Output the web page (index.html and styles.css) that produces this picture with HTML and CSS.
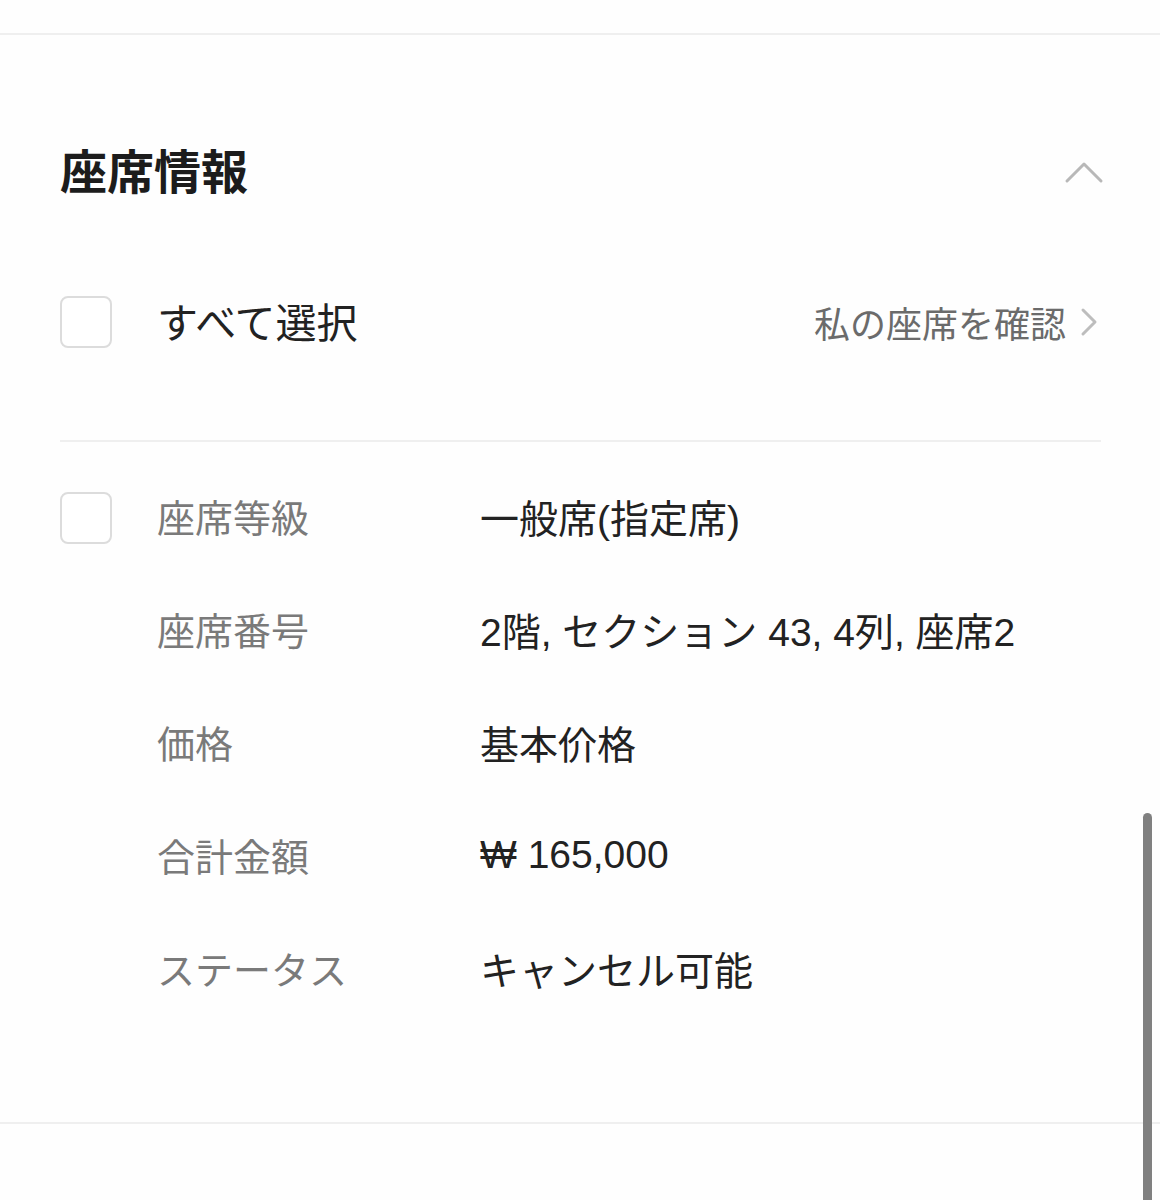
FILE: index.html
```html
<!DOCTYPE html>
<html lang="ja">
<head>
    <meta charset="UTF-8">
    <meta name="viewport" content="width=device-width, initial-scale=1.0">
    <title>座席情報</title>
    <link rel="stylesheet" href="styles.css">
</head>
<body>
    <div class="rule"></div>
    <section class="seat-info">
        <div class="head">
            <h2>座席情報</h2>
            <svg class="fold" width="40" height="24" viewBox="0 0 40 24">
                <polyline points="3,21 20,4 37,21" fill="none" stroke="#b8b8b8" stroke-width="3" stroke-linecap="round" stroke-linejoin="round"/>
            </svg>
        </div>
        <div class="select-all">
            <span class="box"></span>
            <span class="all-label">すべて選択</span>
            <a class="my-seat" href="#">私の座席を確認
                <svg width="18" height="30" viewBox="0 0 18 30">
                    <polyline points="3,3 15,15 3,27" fill="none" stroke="#bdbdbd" stroke-width="3" stroke-linecap="round" stroke-linejoin="round"/>
                </svg>
            </a>
        </div>
        <div class="divider"></div>
        <div class="rows">
            <div class="row">
                <span class="box"></span>
                <span class="label">座席等級</span>
                <span class="value">一般席(指定席)</span>
            </div>
            <div class="row">
                <span class="spacer"></span>
                <span class="label">座席番号</span>
                <span class="value">2階, セクション 43, 4列, 座席2</span>
            </div>
            <div class="row">
                <span class="spacer"></span>
                <span class="label">価格</span>
                <span class="value">基本价格</span>
            </div>
            <div class="row">
                <span class="spacer"></span>
                <span class="label">合計金額</span>
                <span class="value">₩ 165,000</span>
            </div>
            <div class="row">
                <span class="spacer"></span>
                <span class="label">ステータス</span>
                <span class="value">キャンセル可能</span>
            </div>
        </div>
    </section>
    <div class="rule-bottom"></div>
    <div class="scroll-thumb"></div>
</body>
</html>
```

FILE: styles.css
```css
html, body {
    margin: 0;
    padding: 0;
    background: #fefefe;
    height: 1200px;
    overflow: hidden;
    font-family: "Liberation Sans", "Noto Sans CJK JP", sans-serif;
    color: #222;
}
.rule {
    height: 33px;
    border-bottom: 2px solid #efefef;
}
.rule-bottom {
    border-top: 2px solid #efefef;
}
.seat-info {
    padding: 0 59px 126px 60px;
}
.head {
    display: flex;
    justify-content: space-between;
    align-items: center;
    height: 100px;
    margin-top: 87px;
}
.head h2 {
    margin: 0 0 7px;
    font-family: "Noto Sans CJK JP", sans-serif;
    font-size: 47px;
    font-weight: 700;
    color: #1c1c1c;
}
.fold {
    margin-right: -3px;
}
.select-all {
    display: flex;
    align-items: center;
    height: 52px;
    margin-top: 74px;
}
.box {
    width: 48px;
    height: 48px;
    flex: none;
    border: 2px solid #dcdcdc;
    border-radius: 8px;
    background: #fff;
}
.all-label {
    margin-left: 45px;
    padding-bottom: 4px;
    font-family: "Noto Sans CJK JP", sans-serif;
    font-size: 41px;
    color: #222;
}
.my-seat {
    margin-left: auto;
    display: flex;
    align-items: center;
    gap: 14px;
    font-family: "Noto Sans CJK JP", sans-serif;
    font-size: 36px;
    color: #6b6b6b;
    text-decoration: none;
}
.my-seat svg {
    margin-right: 3px;
}
.divider {
    height: 2px;
    background: #efefef;
    margin-top: 92px;
}
.rows {
    display: flex;
    flex-direction: column;
    gap: 61px;
    margin-top: 50px;
}
.row {
    display: flex;
    align-items: center;
    height: 52px;
}
.spacer {
    width: 52px;
    flex: none;
}
.label {
    width: 323px;
    margin-left: 45px;
    padding-bottom: 5px;
    flex: none;
    font-family: "Noto Sans CJK JP", sans-serif;
    font-size: 38px;
    color: #7a7a7a;
}
.value {
    padding-bottom: 5px;
    font-size: 39px;
    color: #222;
}
.scroll-thumb {
    position: absolute;
    left: 1143px;
    top: 813px;
    width: 9px;
    height: 400px;
    border-radius: 5px;
    background: #808080;
}
```
